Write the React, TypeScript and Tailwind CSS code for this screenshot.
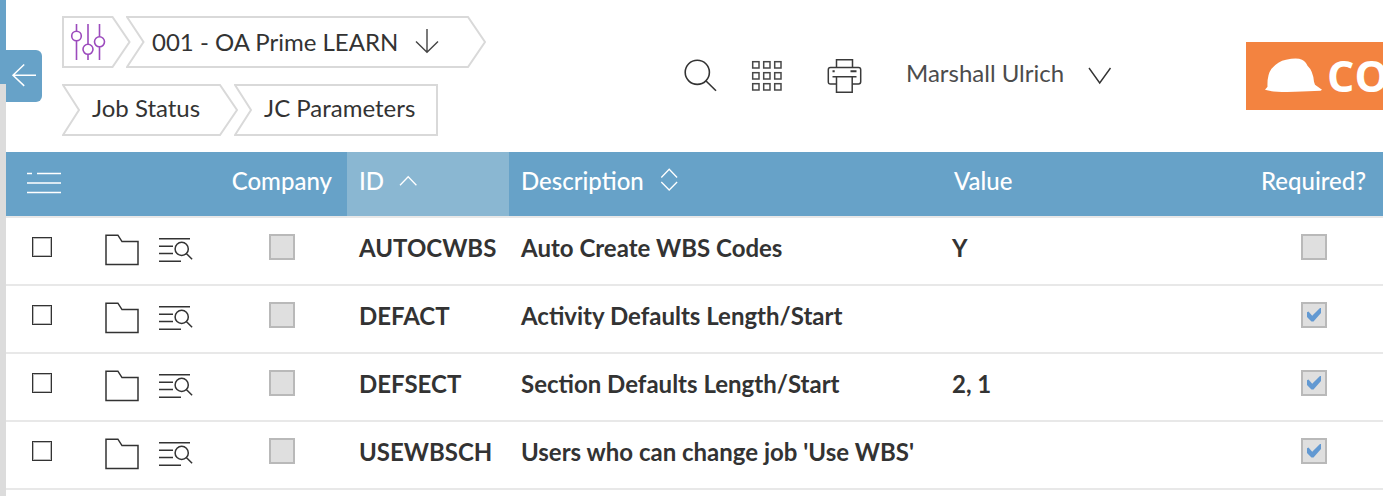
import React from "react";

type Row = { id: string; description: string; value: string; required: boolean };

const rows: Row[] = [
  { id: "AUTOCWBS", description: "Auto Create WBS Codes", value: "Y", required: false },
  { id: "DEFACT", description: "Activity Defaults Length/Start", value: "", required: true },
  { id: "DEFSECT", description: "Section Defaults Length/Start", value: "2, 1", required: true },
  { id: "USEWBSCH", description: "Users who can change job 'Use WBS'", value: "", required: true },
];

function Crumb({ className, width, points, children }: { className: string; width: number; points: string; children: React.ReactNode }) {
  return (
    <div className={`relative flex h-[52px] shrink-0 ${className}`}>
      <svg className="absolute inset-0" width={width} height="52" fill="white" stroke="#d9d9d9" strokeWidth="2">
        <polygon points={points} />
      </svg>
      <div className="relative flex whitespace-nowrap">{children}</div>
    </div>
  );
}

function SlidersIcon() {
  return (
    <svg width="36" height="38" fill="none" stroke="#9c4bbd" strokeWidth="1.6">
      <path d="M6.500 1v7M6.500 18v19M18 1v20M18 31v6M29.500 1v13M29.500 24v13" />
      <circle cx="6.500" cy="13" r="4.800" />
      <circle cx="18" cy="26.300" r="5" />
      <circle cx="29.500" cy="18.800" r="5" />
    </svg>
  );
}

function SearchIcon() {
  return (
    <svg width="36" height="36" fill="none" stroke="#333" strokeWidth="1.6">
      <circle cx="14.300" cy="14.300" r="12.100" />
      <path d="M22.800 22.800L33 32.700" />
    </svg>
  );
}

function GridIcon() {
  return (
    <svg width="32" height="32" fill="none" stroke="#484848" strokeWidth="1.5">
      {[1.7, 12.7, 23.7].map((y) =>
        [1.7, 12.7, 23.7].map((x) => <rect key={`${x}-${y}`} x={x} y={y} width="6.300" height="6.300" />),
      )}
    </svg>
  );
}

function PrinterIcon() {
  return (
    <svg width="36" height="36" fill="none" stroke="#3a3a3a" strokeWidth="1.500">
      <path d="M10.500 9.500V1.700h16v7.800M10.500 26H4.500q-2.200 0-2.200-2.200V11.700q0-2.200 2.200-2.200h28q2.200 0 2.200 2.200v12.100q0 2.200-2.200 2.200h-6M6.500 18.700h24M10.500 18.700v15.500h15.700V18.700" />
      <path d="M6.500 13.200h2.200M24.500 13.200h6" strokeWidth="2" />
    </svg>
  );
}

function FolderIcon() {
  return (
    <svg width="36" height="34" fill="none" stroke="#333" strokeWidth="1.500">
      <path d="M1 2.200h11.900L17 8.600h16v23H1z" />
    </svg>
  );
}

function DetailIcon() {
  return (
    <svg width="36" height="28" fill="none" stroke="#333" strokeWidth="1.500">
      <path d="M1 2.700h31M1 10.200h14M1 17.600h14M1 25.200h22" />
      <circle cx="23.700" cy="12.900" r="6.600" />
      <path d="M28.300 17.500l5.800 5.800" />
    </svg>
  );
}

function DisabledCheck({ checked }: { checked?: boolean }) {
  return (
    <div className="flex size-[26px] items-center justify-center border-2 border-[#b9b9b9] bg-[#dfdfdf]">
      {checked && (
        <svg width="16" height="16" fill="#6299d2">
          <path d="M1 5.200L2.500 4.500 6.200 8.700 14 1h1v5L7.500 14.500H5.500L1 10z" />
        </svg>
      )}
    </div>
  );
}

export default function App() {
  return (
    <div className="flex h-[496px] w-[1383px] overflow-hidden bg-white font-['Lato',sans-serif] text-[24px] leading-[32px] text-[#333]">
      <div className="flex w-[6px] shrink-0 flex-col">
        <div className="h-[84px] bg-[#67a2c8]" />
        <div className="flex-1 bg-[#dcdcdc]" />
      </div>
      <div className="flex w-[1377px] shrink-0 flex-col">
        <header className="flex h-[152px] shrink-0">
          <div className="mt-[50px] flex h-[52px] w-9 items-center rounded-r-[6px] bg-[#67a2c8]">
            <svg width="36" height="52" fill="none" stroke="white" strokeWidth="1.500">
              <path d="M30 25.300H7M18.200 14.500L7 25.300l11.200 10.600" />
            </svg>
          </div>
          <nav className="ml-5 flex w-[600px] flex-col gap-4 pt-4">
            <div className="flex">
              <Crumb className="w-16" width={70} points="1,1 50.500,1 67.500,26 50.500,51 1,51">
                <div className="pt-[7px] pl-2"><SlidersIcon /></div>
              </Crumb>
              <Crumb className="w-[360px]" width={362} points="1,1 342,1 359,26 342,51 1,51 17.500,26">
                <span className="w-[263px] pt-[10px] pl-[26px]">001 - OA Prime LEARN</span>
                <svg className="mt-3 ml-[26px]" width="26" height="28" fill="none" stroke="#444" strokeWidth="1.400">
                  <path d="M12 1v23M1 13.500l11 10.800 11-10.800" />
                </svg>
              </Crumb>
            </div>
            <div className="flex">
              <Crumb className="w-[172px]" width={178} points="1,1 158,1 175,26 158,51 1,51 17,26">
                <span className="pt-[8px] pl-[30px]">Job Status</span>
              </Crumb>
              <Crumb className="w-[204px]" width={204} points="1,1 203,1 203,51 1,51 17,26">
                <span className="pt-[8px] pl-[30px]">JC Parameters</span>
              </Crumb>
            </div>
          </nav>
          <div className="ml-[21px] flex pt-[57px]">
            <div className="pt-px"><SearchIcon /></div>
            <div className="ml-8 pt-[3px]"><GridIcon /></div>
            <div className="ml-[43px] pt-px"><PrinterIcon /></div>
            <span className="ml-[44px] w-[170px] whitespace-nowrap text-[#4c4c4c]">Marshall Ulrich</span>
            <svg className="mt-[10px] ml-[12px]" width="26" height="20" fill="none" stroke="#333" strokeWidth="1.400">
              <path d="M1 1l10.700 15L22.500 1" />
            </svg>
          </div>
          <div className="mt-[42px] ml-auto flex h-[68px] w-[137px] overflow-hidden bg-[#f38340]">
            <svg className="ml-[18px] shrink-0" width="60" height="68" fill="white">
              <path d="M1 47.800l2.500-3q-.5-12 4-18Q14 19 22 17.700q11-2.400 16 0 3.500 1.500 5.500 6 5.500 5 6.500 16l1 3 7 5-1.500 1Q45 49.200 31 49.800 10 50.500 1 47.800z" />
            </svg>
            <span className="ml-[3px] pt-px font-['Open_Sans',sans-serif] text-[43px] leading-[66px] font-bold text-white">CO</span>
          </div>
        </header>
        <div className="grid h-16 shrink-0 grid-cols-[341px_162px_433px_299px_142px] bg-[#67a2c8] font-medium text-white">
          <div className="flex justify-between pt-[13px] pr-[15px] pl-[21px]">
            <svg className="mt-[7px]" width="34" height="24" fill="none" stroke="white" strokeWidth="1.600">
              <path d="M0 1.500h5M10 1.500h24M0 11h34M0 20.500h34" />
            </svg>
            <span>Company</span>
          </div>
          <div className="flex bg-[#8ab7d2] pt-[13px] pl-3">
            ID
            <svg className="mt-[8px] ml-[15px]" width="18" height="14" fill="none" stroke="white" strokeWidth="1.300">
              <path d="M1 12.200l8.200-8.500 8.200 8.500" />
            </svg>
          </div>
          <div className="flex pt-[13px] pl-3">
            <span className="w-[122px]">Description</span>
            <svg className="mt-[3px] ml-[17px]" width="20" height="24" fill="none" stroke="white" strokeWidth="1.300">
              <path d="M1.300 9.500L9.200 1.300l7.900 8.200M1.300 14l7.900 8 7.900-8" />
            </svg>
          </div>
          <div className="pt-[13px] pl-3">Value</div>
          <div className="pt-[13px] pl-5">Required?</div>
        </div>
        {rows.map((row) => (
          <div key={row.id} className="grid h-[68px] shrink-0 grid-cols-[341px_162px_431px_301px_142px] border-t-2 border-[#e8e8e8] font-bold whitespace-nowrap">
            <div className="flex">
              <div className="mt-[19px] ml-[26px] size-5 border border-[#333] shadow-[inset_0_0_0_1px_#bbb]" />
              <div className="mt-[15px] ml-[53px]"><FolderIcon /></div>
              <div className="mt-[18px] ml-[17px]"><DetailIcon /></div>
              <div className="mt-4 ml-[75px]"><DisabledCheck /></div>
            </div>
            <div className="pt-[14px] pl-3">{row.id}</div>
            <div className="pt-[14px] pl-3">{row.description}</div>
            <div className="pt-[14px] pl-3">{row.value}</div>
            <div className="pt-4 pl-[60px]"><DisabledCheck checked={row.required} /></div>
          </div>
        ))}
        <div className="h-[8px] shrink-0 border-t-2 border-[#e8e8e8]" />
      </div>
    </div>
  );
}
